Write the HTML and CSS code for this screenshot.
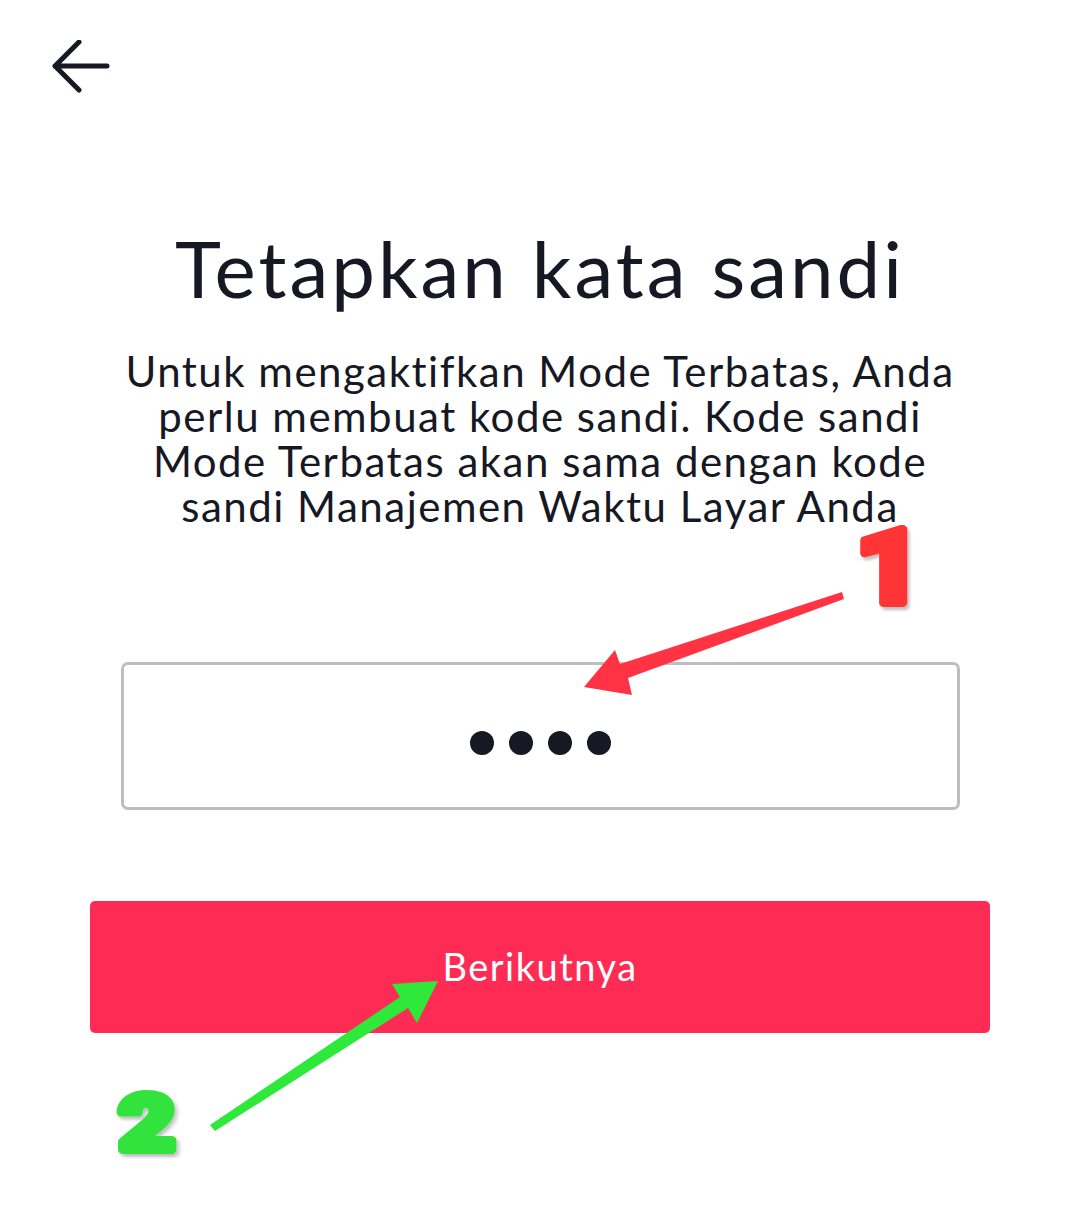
FILE: index.html
```html
<!DOCTYPE html>
<html lang="id">
<head>
<meta charset="utf-8">
<title>Tetapkan kata sandi</title>
<link rel="stylesheet" href="styles.css">
</head>
<body>
<div class="screen">
  <header class="topbar">
    <button class="back" aria-label="Kembali">
      <svg width="60" height="60" viewBox="0 0 60 60" aria-hidden="true">
        <path d="M4 26 H56 M28 2 L4 26 L28 50" fill="none" stroke="#161823" stroke-width="5" stroke-linecap="round" stroke-linejoin="round"/>
      </svg>
    </button>
  </header>

  <main class="content">
    <h1 class="title">Tetapkan kata sandi</h1>
    <p class="desc">Untuk mengaktifkan Mode Terbatas, Anda perlu membuat kode sandi. Kode sandi Mode Terbatas akan sama dengan kode sandi Manajemen Waktu Layar Anda</p>

    <div class="pin-box">
      <span class="dot"></span><span class="dot"></span><span class="dot"></span><span class="dot"></span>
    </div>

    <button class="next">Berikutnya</button>
  </main>

  <svg class="marks" width="1080" height="1225" viewBox="0 0 1080 1225" aria-hidden="true">
    <defs>
      <filter id="shade" x="-30%" y="-30%" width="160%" height="160%">
        <feDropShadow dx="2" dy="3" stdDeviation="1.5" flood-color="#000" flood-opacity="0.25"/>
      </filter>
    </defs>
    <polygon points="584,687 615,650 620,664 842,592 844,599 628,678 632,695" fill="#ff3344"/>
    <polygon points="438,981 392,984 400,997 210,1125 215,1131 408,1008 417,1023" fill="#2ee83a"/>
    <text class="num num-one" x="0" y="0" transform="translate(889 603) scale(1.12 1)" filter="url(#shade)">1</text>
    <text class="num num-two" x="0" y="0" transform="translate(147 1150) scale(1.25 1)" filter="url(#shade)">2</text>
  </svg>
</div>
</body>
</html>
```

FILE: styles.css
```css
* {
  box-sizing: border-box;
}

html, body {
  margin: 0;
  padding: 0;
  background: #ffffff;
}

body {
  font-family: Lato, "Open Sans", "Liberation Sans", sans-serif;
  color: #161823;
}

.screen {
  position: relative;
  width: 1080px;
  height: 1225px;
  overflow: hidden;
}

.topbar {
  display: flex;
  padding: 40px 0 0 51px;
}

.back {
  display: flex;
  padding: 0;
  border: 0;
  background: none;
}

.content {
  display: flex;
  flex-direction: column;
  align-items: center;
}

.title {
  margin: 129px 0 0;
  font-size: 78px;
  font-weight: 400;
  line-height: 78px;
  letter-spacing: 3px;
}

.desc {
  width: 860px;
  margin: 42px 0 0;
  font-size: 42px;
  line-height: 45px;
  letter-spacing: 1.5px;
  text-align: center;
}

.pin-box {
  display: flex;
  justify-content: center;
  align-items: center;
  gap: 15px;
  width: 839px;
  height: 148px;
  margin-top: 133px;
  padding-top: 14px;
  border: 3px solid #bebebe;
  border-radius: 7px;
}

.dot {
  width: 24px;
  height: 24px;
  border-radius: 50%;
  background: #161823;
}

.next {
  width: 900px;
  height: 132px;
  margin-top: 91px;
  border: 0;
  border-radius: 5px;
  background: #fe2c55;
  color: #ffffff;
  font-family: Lato, "Open Sans", "Liberation Sans", sans-serif;
  font-size: 38px;
  letter-spacing: 1.5px;
  padding-bottom: 4px;
}

.marks {
  position: absolute;
  left: 0;
  top: 0;
  pointer-events: none;
}

.num {
  font-family: Roboto, "Open Sans", sans-serif;
  font-weight: 900;
  text-anchor: middle;
  stroke-linejoin: round;
  paint-order: stroke;
}

.num-one {
  font-size: 104px;
  fill: #ff3535;
  stroke: #ff3535;
  stroke-width: 8px;
}

.num-two {
  font-size: 78px;
  fill: #33e33d;
  stroke: #33e33d;
  stroke-width: 8px;
}
```
